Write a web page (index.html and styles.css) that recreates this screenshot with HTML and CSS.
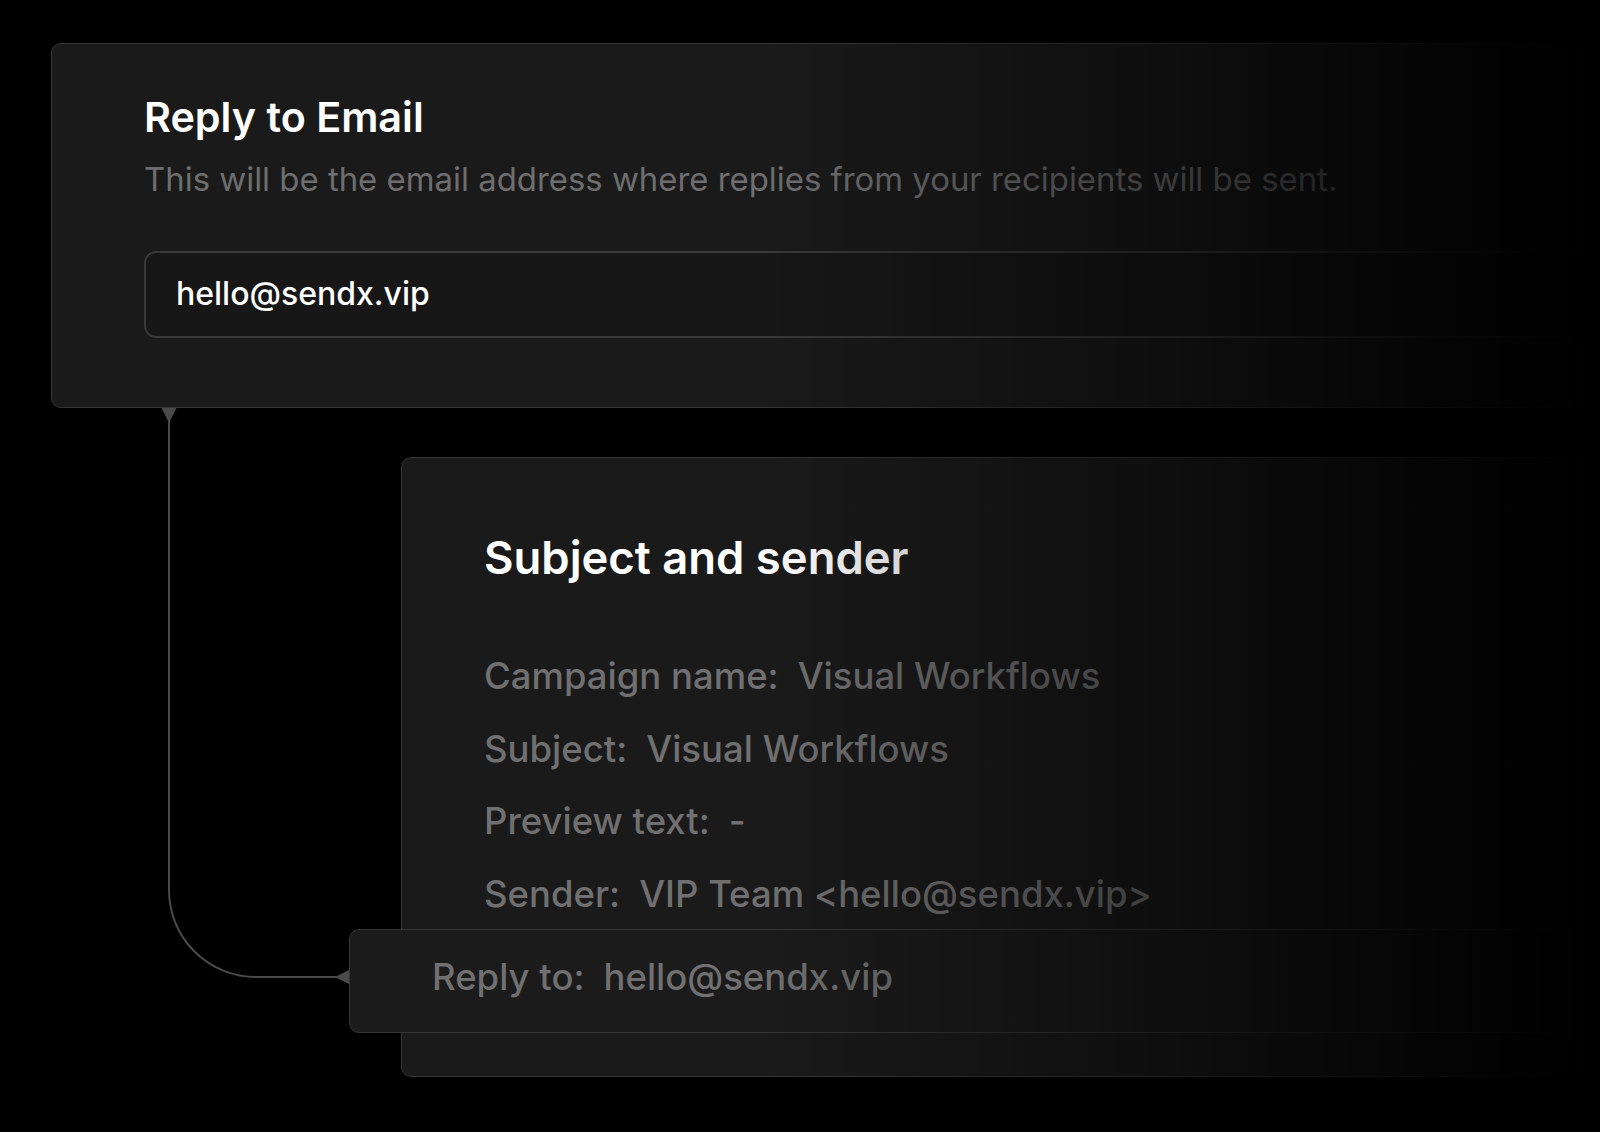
FILE: index.html
```html
<!DOCTYPE html>
<html lang="en">
<head>
    <meta charset="UTF-8">
    <meta name="viewport" content="width=device-width, initial-scale=1.0">
    <title>Workflow - Reply to Email</title>
    <link rel="stylesheet" href="styles.css">
</head>
<body>
    <div class="canvas">
        <!-- edge from "Reply to Email" down to the "Reply to" row -->
        <svg class="edge" width="360" height="1132" viewBox="0 0 360 1132">
            <path d="M169 414 V890 A87 87 0 0 0 256 977 H340" fill="none" stroke="#4a4a4a" stroke-width="2"/>
            <polygon points="161.5,408 176.5,408 169,423" fill="#4a4a4a"/>
            <polygon points="335,977 350,969.5 350,984.5" fill="#4a4a4a"/>
        </svg>

        <section class="node node-reply">
            <h2>Reply to Email</h2>
            <p class="hint">This will be the email address where replies from your recipients will be sent.</p>
            <div class="field">hello@sendx.vip</div>
        </section>

        <section class="node node-subject">
            <h2>Subject and sender</h2>
            <ul class="meta">
                <li><span class="key">Campaign name:</span>Visual Workflows</li>
                <li><span class="key">Subject:</span>Visual Workflows</li>
                <li><span class="key">Preview text:</span>-</li>
                <li><span class="key">Sender:</span>VIP Team &lt;hello@sendx.vip&gt;</li>
            </ul>
            <div class="node node-replyto"><span class="key">Reply to:</span>hello@sendx.vip</div>
        </section>

        <div class="fade"></div>
    </div>
</body>
</html>
```

FILE: styles.css
```css
* {
    box-sizing: border-box;
}
body {
    margin: 0;
    background-color: #000;
    font-family: Inter, "Noto Sans", sans-serif;
    overflow: hidden;
}
.canvas {
    position: relative;
    width: 1600px;
    height: 1132px;
    overflow: hidden;
    padding: 43px 0 0 51px;
}
.edge {
    position: absolute;
    left: 0;
    top: 0;
    z-index: 1;
}
.node {
    background-color: #1a1a1a;
    border: 1px solid #363636;
    border-radius: 10px;
}
.node h2 {
    margin: 0;
    color: #fff;
    font-weight: 600;
}
.node-reply {
    width: 1620px;
    padding: 49px 0 69px 92px;
}
.node-reply h2 {
    font-size: 41.3px;
    line-height: 48px;
}
.hint {
    margin: 18px 0 0;
    font-size: 32.9px;
    line-height: 40px;
    color: #6e6e6e;
}
.field {
    margin-top: 52px;
    height: 87px;
    padding: 22px 30px;
    border: 2px solid #383838;
    border-radius: 12px;
    background-color: #171717;
    color: #fff;
    font-size: 32px;
    font-weight: 500;
    line-height: 38px;
}
.node-subject {
    position: relative;
    width: 1620px;
    height: 620px;
    margin: 49px 0 0 350px;
    padding: 73px 0 0 82px;
}
.node-subject h2 {
    font-size: 45.4px;
    line-height: 53px;
}
.meta {
    list-style: none;
    margin: 56px 0 0;
    padding: 0;
    font-size: 36.5px;
    font-weight: 500;
    line-height: 72.5px;
    color: #707070;
}
.key {
    margin-right: 19px;
}
.node-replyto {
    position: absolute;
    left: -53px;
    top: 471px;
    width: 1620px;
    height: 104px;
    padding: 25px 0 0 82px;
    font-size: 36.5px;
    font-weight: 500;
    line-height: 44px;
    color: #707070;
    background-color: #1b1b1b;
    z-index: 2;
}
.fade {
    position: absolute;
    inset: 0;
    z-index: 3;
    pointer-events: none;
    background: linear-gradient(to right, rgba(0,0,0,0) 760px, rgba(0,0,0,0.5) 1200px, rgba(0,0,0,0.85) 1450px, #000 1590px);
}
```
